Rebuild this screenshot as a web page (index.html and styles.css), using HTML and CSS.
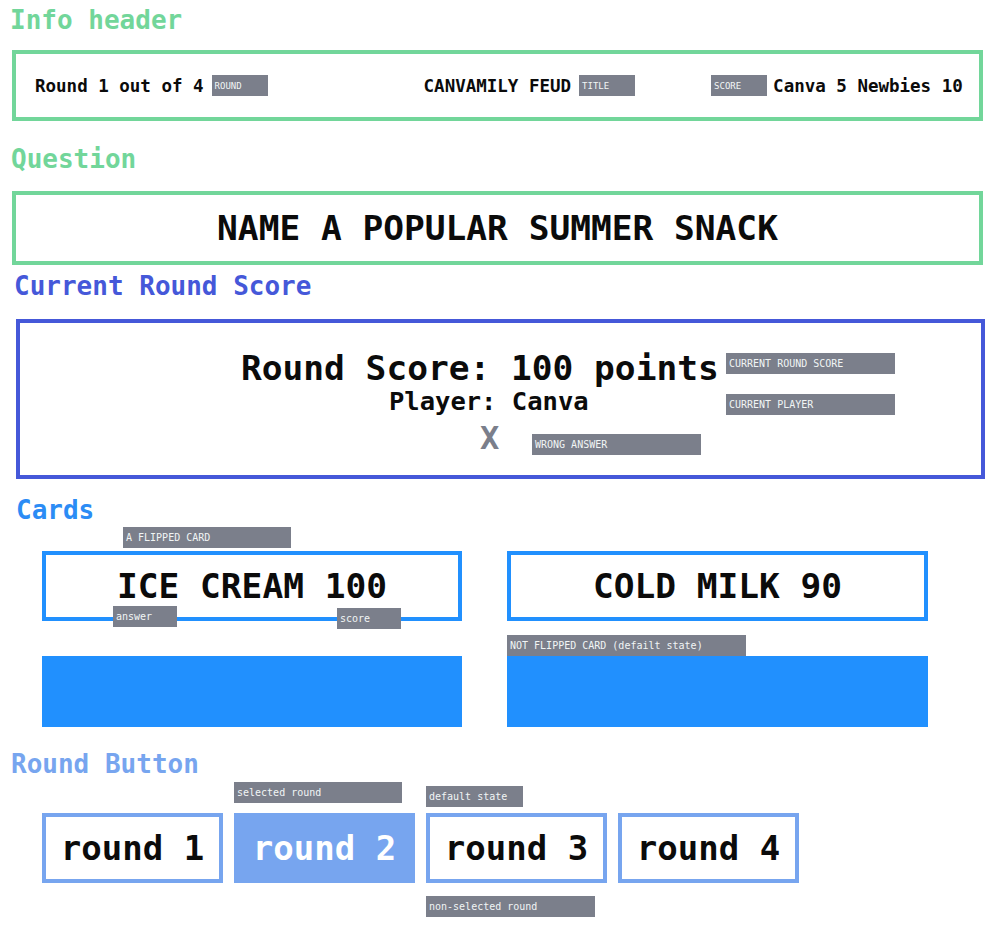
FILE: index.html
```html
<!DOCTYPE html>
<html lang="en">
<head>
<meta charset="utf-8">
<title>Canvamily Feud – components</title>
<link rel="stylesheet" href="styles.css">
</head>
<body>
<div class="page">
  <h2 class="sec-title t-green t-info">Info header</h2>
  <div class="info-box">
    <div class="info-group g-round"><span class="info-text">Round 1 out of 4</span><span class="tag tag-hdr">ROUND</span></div>
    <div class="info-group g-title"><span class="info-text">CANVAMILY FEUD</span><span class="tag tag-hdr">TITLE</span></div>
    <div class="info-group g-score"><span class="tag tag-hdr">SCORE</span><span class="info-text">Canva 5 Newbies 10</span></div>
  </div>

  <h2 class="sec-title t-green t-question">Question</h2>
  <div class="question-box">NAME A POPULAR SUMMER SNACK</div>

  <h2 class="sec-title t-indigo t-current">Current Round Score</h2>
  <div class="score-box">
    <div class="score-line">Round Score: 100 points</div>
    <div class="player-line">Player: Canva</div>
    <div class="wrong-mark">X</div>
    <span class="tag tag-crs">CURRENT ROUND SCORE</span>
    <span class="tag tag-cp">CURRENT PLAYER</span>
    <span class="tag tag-wa">WRONG ANSWER</span>
  </div>

  <h2 class="sec-title t-blue t-cards">Cards</h2>
  <div class="cards">
    <div class="card card-flipped">
      <span>ICE CREAM 100</span>
      <span class="tag tag-flipped">A FLIPPED CARD</span>
      <span class="tag tag-answer">answer</span>
      <span class="tag tag-score">score</span>
    </div>
    <div class="card card-flipped"><span>COLD MILK 90</span></div>
    <div class="card-back"></div>
    <div class="card-back">
      <span class="tag tag-notflipped">NOT FLIPPED CARD (defailt state)</span>
    </div>
  </div>

  <h2 class="sec-title t-light t-round">Round Button</h2>
  <div class="rounds">
    <div class="round-slot">
      <span class="tag tag-spacer"></span>
      <div class="round-btn"><span>round 1</span></div>
    </div>
    <div class="round-slot">
      <span class="tag tag-selected">selected round</span>
      <div class="round-btn selected"><span>round 2</span></div>
    </div>
    <div class="round-slot">
      <span class="tag tag-default">default state</span>
      <div class="round-btn"><span>round 3</span></div>
      <span class="tag tag-nonsel">non-selected round</span>
    </div>
    <div class="round-slot">
      <span class="tag tag-spacer"></span>
      <div class="round-btn"><span>round 4</span></div>
    </div>
  </div>
</div>
</body>
</html>
```

FILE: styles.css
```css
* { box-sizing: border-box; }

html, body {
  margin: 0;
  padding: 0;
  background: #ffffff;
}

body {
  font-family: "DejaVu Sans Mono", "Liberation Mono", monospace;
  color: #0b0b0b;
}

.page {
  width: 999px;
  min-height: 926px;
}

/* section titles */
.sec-title {
  margin: 0;
  font-size: 26px;
  line-height: 30px;
  font-weight: bold;
}
.t-green { color: #72d69a; }
.t-indigo { color: #4558d9; }
.t-blue { color: #2b8cf5; }
.t-light { color: #77a5ef; }

.t-info { margin: 5px 0 0 10px; }
.t-question { margin: 23px 0 0 11px; }
.t-current { margin: 6px 0 0 14px; }
.t-cards { margin: 16px 0 0 16px; }
.t-round { margin: 22px 0 0 11px; }

/* gray annotation tags */
.tag {
  display: flex;
  align-items: center;
  height: 21px;
  padding-left: 3px;
  background: #7b7f8b;
  color: #f1f5f5;
  font-family: "DejaVu Sans Mono", "Liberation Mono", monospace;
  font-size: 10px;
  font-weight: normal;
  white-space: nowrap;
  letter-spacing: 0;
}

/* info header */
.info-box {
  margin: 15px 0 0 12px;
  width: 971px;
  height: 71px;
  border: 4px solid #72d69a;
  display: flex;
  align-items: center;
  padding-left: 19px;
}
.info-group {
  display: flex;
  align-items: center;
}
.info-text {
  font-size: 17.5px;
  line-height: 20px;
  font-weight: bold;
  white-space: nowrap;
}
.tag-hdr {
  width: 56px;
  font-size: 9px;
}
.g-round .tag-hdr { margin-left: 8px; }
.g-title { margin-left: 156px; }
.g-title .tag-hdr { margin-left: 8px; }
.g-score { margin-left: 76px; }
.g-score .info-text { margin-left: 6px; }

/* question */
.question-box {
  margin: 17px 0 0 12px;
  width: 971px;
  height: 74px;
  border: 4px solid #72d69a;
  display: flex;
  align-items: center;
  justify-content: center;
  font-size: 34.5px;
  font-weight: bold;
  white-space: nowrap;
}

/* current round score */
.score-box {
  position: relative;
  margin: 18px 0 0 16px;
  width: 969px;
  height: 160px;
  border: 4px solid #4558d9;
  padding-top: 27px;
}
.score-line {
  font-size: 34.5px;
  line-height: 37px;
  font-weight: bold;
  padding-left: 221px;
  white-space: nowrap;
}
.player-line {
  font-size: 25.5px;
  line-height: 28px;
  font-weight: bold;
  padding-left: 369px;
  white-space: nowrap;
}
.wrong-mark {
  margin-top: 6px;
  font-size: 32px;
  line-height: 34px;
  font-weight: bold;
  color: #7b7f8b;
  padding-left: 460px;
}
.tag-crs, .tag-cp, .tag-wa {
  position: absolute;
  width: 169px;
}
.tag-crs { left: 706px; top: 30px; }
.tag-cp { left: 706px; top: 71px; }
.tag-wa { left: 512px; top: 111px; }

/* cards */
.cards {
  margin: 26px 0 0 42px;
  display: grid;
  grid-template-columns: 420px 421px;
  grid-template-rows: 70px 71px;
  column-gap: 45px;
  row-gap: 35px;
}
.card {
  position: relative;
  border: 4px solid #2190fe;
  background: #ffffff;
  display: flex;
  align-items: center;
  justify-content: center;
  font-size: 34.5px;
  font-weight: bold;
  white-space: nowrap;
}
.card-back {
  position: relative;
  background: #2190fe;
}
.tag-flipped {
  position: absolute;
  left: 77px;
  top: -28px;
  width: 168px;
}
.tag-answer {
  position: absolute;
  left: 67px;
  top: 51px;
  width: 64px;
}
.tag-score {
  position: absolute;
  left: 291px;
  top: 53px;
  width: 64px;
}
.tag-notflipped {
  position: absolute;
  left: 0;
  top: -21px;
  width: 239px;
}

/* round buttons */
.rounds {
  margin: 3px 0 0 42px;
  display: flex;
  gap: 11px;
}
.round-slot {
  display: flex;
  flex-direction: column;
  width: 181px;
}
.round-slot .tag {
  width: 168px;
}
.tag-spacer {
  visibility: hidden;
}
.tag-selected {
  margin-bottom: 10px;
}
.tag-default {
  width: 97px !important;
  margin-top: 4px;
  margin-bottom: 6px;
}
.tag-nonsel {
  width: 169px !important;
  margin-top: 13px;
}
.round-slot:first-child .tag-spacer,
.round-slot:last-child .tag-spacer {
  margin-bottom: 10px;
}
.round-btn {
  width: 181px;
  height: 70px;
  border: 4px solid #77a5ef;
  background: #ffffff;
  display: flex;
  align-items: center;
  justify-content: center;
  font-size: 34px;
  font-weight: bold;
  white-space: nowrap;
}
.round-btn.selected {
  background: #77a5ef;
  color: #ffffff;
}
```
